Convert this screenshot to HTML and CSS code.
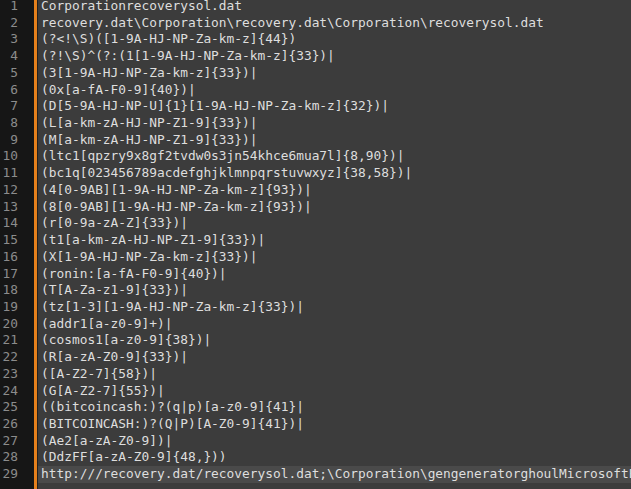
FILE: index.html
```html
<!DOCTYPE html>
<html>
<head>
<meta charset="utf-8">
<link rel="stylesheet" href="styles.css">
</head>
<body>
<div class="editor">
  <div class="gutter">
    <div class="ln">1</div><div class="ln">2</div><div class="ln">3</div><div class="ln">4</div><div class="ln">5</div><div class="ln">6</div><div class="ln">7</div><div class="ln">8</div><div class="ln">9</div><div class="ln">10</div><div class="ln">11</div><div class="ln">12</div><div class="ln">13</div><div class="ln">14</div><div class="ln">15</div><div class="ln">16</div><div class="ln">17</div><div class="ln">18</div><div class="ln">19</div><div class="ln">20</div><div class="ln">21</div><div class="ln">22</div><div class="ln">23</div><div class="ln">24</div><div class="ln">25</div><div class="ln">26</div><div class="ln">27</div><div class="ln">28</div><div class="ln">29</div>
  </div>
  <div class="marker"></div>
  <div class="code">
    <div class="line">Corporationrecoverysol.dat</div>
    <div class="line">recovery.dat\Corporation\recovery.dat\Corporation\recoverysol.dat</div>
    <div class="line">(?&lt;!\S)([1-9A-HJ-NP-Za-km-z]{44})</div>
    <div class="line">(?!\S)^(?:(1[1-9A-HJ-NP-Za-km-z]{33})|</div>
    <div class="line">(3[1-9A-HJ-NP-Za-km-z]{33})|</div>
    <div class="line">(0x[a-fA-F0-9]{40})|</div>
    <div class="line">(D[5-9A-HJ-NP-U]{1}[1-9A-HJ-NP-Za-km-z]{32})|</div>
    <div class="line">(L[a-km-zA-HJ-NP-Z1-9]{33})|</div>
    <div class="line">(M[a-km-zA-HJ-NP-Z1-9]{33})|</div>
    <div class="line">(ltc1[qpzry9x8gf2tvdw0s3jn54khce6mua7l]{8,90})|</div>
    <div class="line">(bc1q[023456789acdefghjklmnpqrstuvwxyz]{38,58})|</div>
    <div class="line">(4[0-9AB][1-9A-HJ-NP-Za-km-z]{93})|</div>
    <div class="line">(8[0-9AB][1-9A-HJ-NP-Za-km-z]{93})|</div>
    <div class="line">(r[0-9a-zA-Z]{33})|</div>
    <div class="line">(t1[a-km-zA-HJ-NP-Z1-9]{33})|</div>
    <div class="line">(X[1-9A-HJ-NP-Za-km-z]{33})|</div>
    <div class="line">(ronin:[a-fA-F0-9]{40})|</div>
    <div class="line">(T[A-Za-z1-9]{33})|</div>
    <div class="line">(tz[1-3][1-9A-HJ-NP-Za-km-z]{33})|</div>
    <div class="line">(addr1[a-z0-9]+)|</div>
    <div class="line">(cosmos1[a-z0-9]{38})|</div>
    <div class="line">(R[a-zA-Z0-9]{33})|</div>
    <div class="line">([A-Z2-7]{58})|</div>
    <div class="line">(G[A-Z2-7]{55})|</div>
    <div class="line">((bitcoincash:)?(q|p)[a-z0-9]{41}|</div>
    <div class="line">(BITCOINCASH:)?(Q|P)[A-Z0-9]{41})|</div>
    <div class="line">(Ae2[a-zA-Z0-9])|</div>
    <div class="line">(DdzFF[a-zA-Z0-9]{48,}))</div>
    <div class="line current">http:///recovery.dat/recoverysol.dat;\Corporation\gengeneratorghoulMicrosoftEdge\recovery.dat</div>
  </div>
</div>
</body>
</html>
```
FILE: styles.css
```css
html, body {
  margin: 0;
  padding: 0;
  background: #3c3c3c;
  height: 100%;
  overflow: hidden;
}

.editor {
  display: flex;
  height: 489px;
  font-family: "DejaVu Sans Mono", "Liberation Mono", monospace;
  font-size: 12.85px;
  line-height: 16.72px;
  overflow: hidden;
}

.gutter {
  width: 34px;
  flex: none;
  background: #161616;
  color: #8c8c8c;
  text-align: right;
  box-sizing: border-box;
  padding-right: 16px;
  margin-top: -2px;
}

.gutter .ln {
  height: 16.72px;
}

.marker {
  width: 3px;
  flex: none;
  background: #e5801c;
  border-right: 1px solid #202020;
}

.code {
  flex: 1;
  min-width: 0;
  color: #dedede;
  overflow: hidden;
  margin-top: -2px;
}

.line {
  height: 16.72px;
  padding-left: 3px;
  white-space: pre;
}

.line.current {
  background: #4a4a4a;
}
```
